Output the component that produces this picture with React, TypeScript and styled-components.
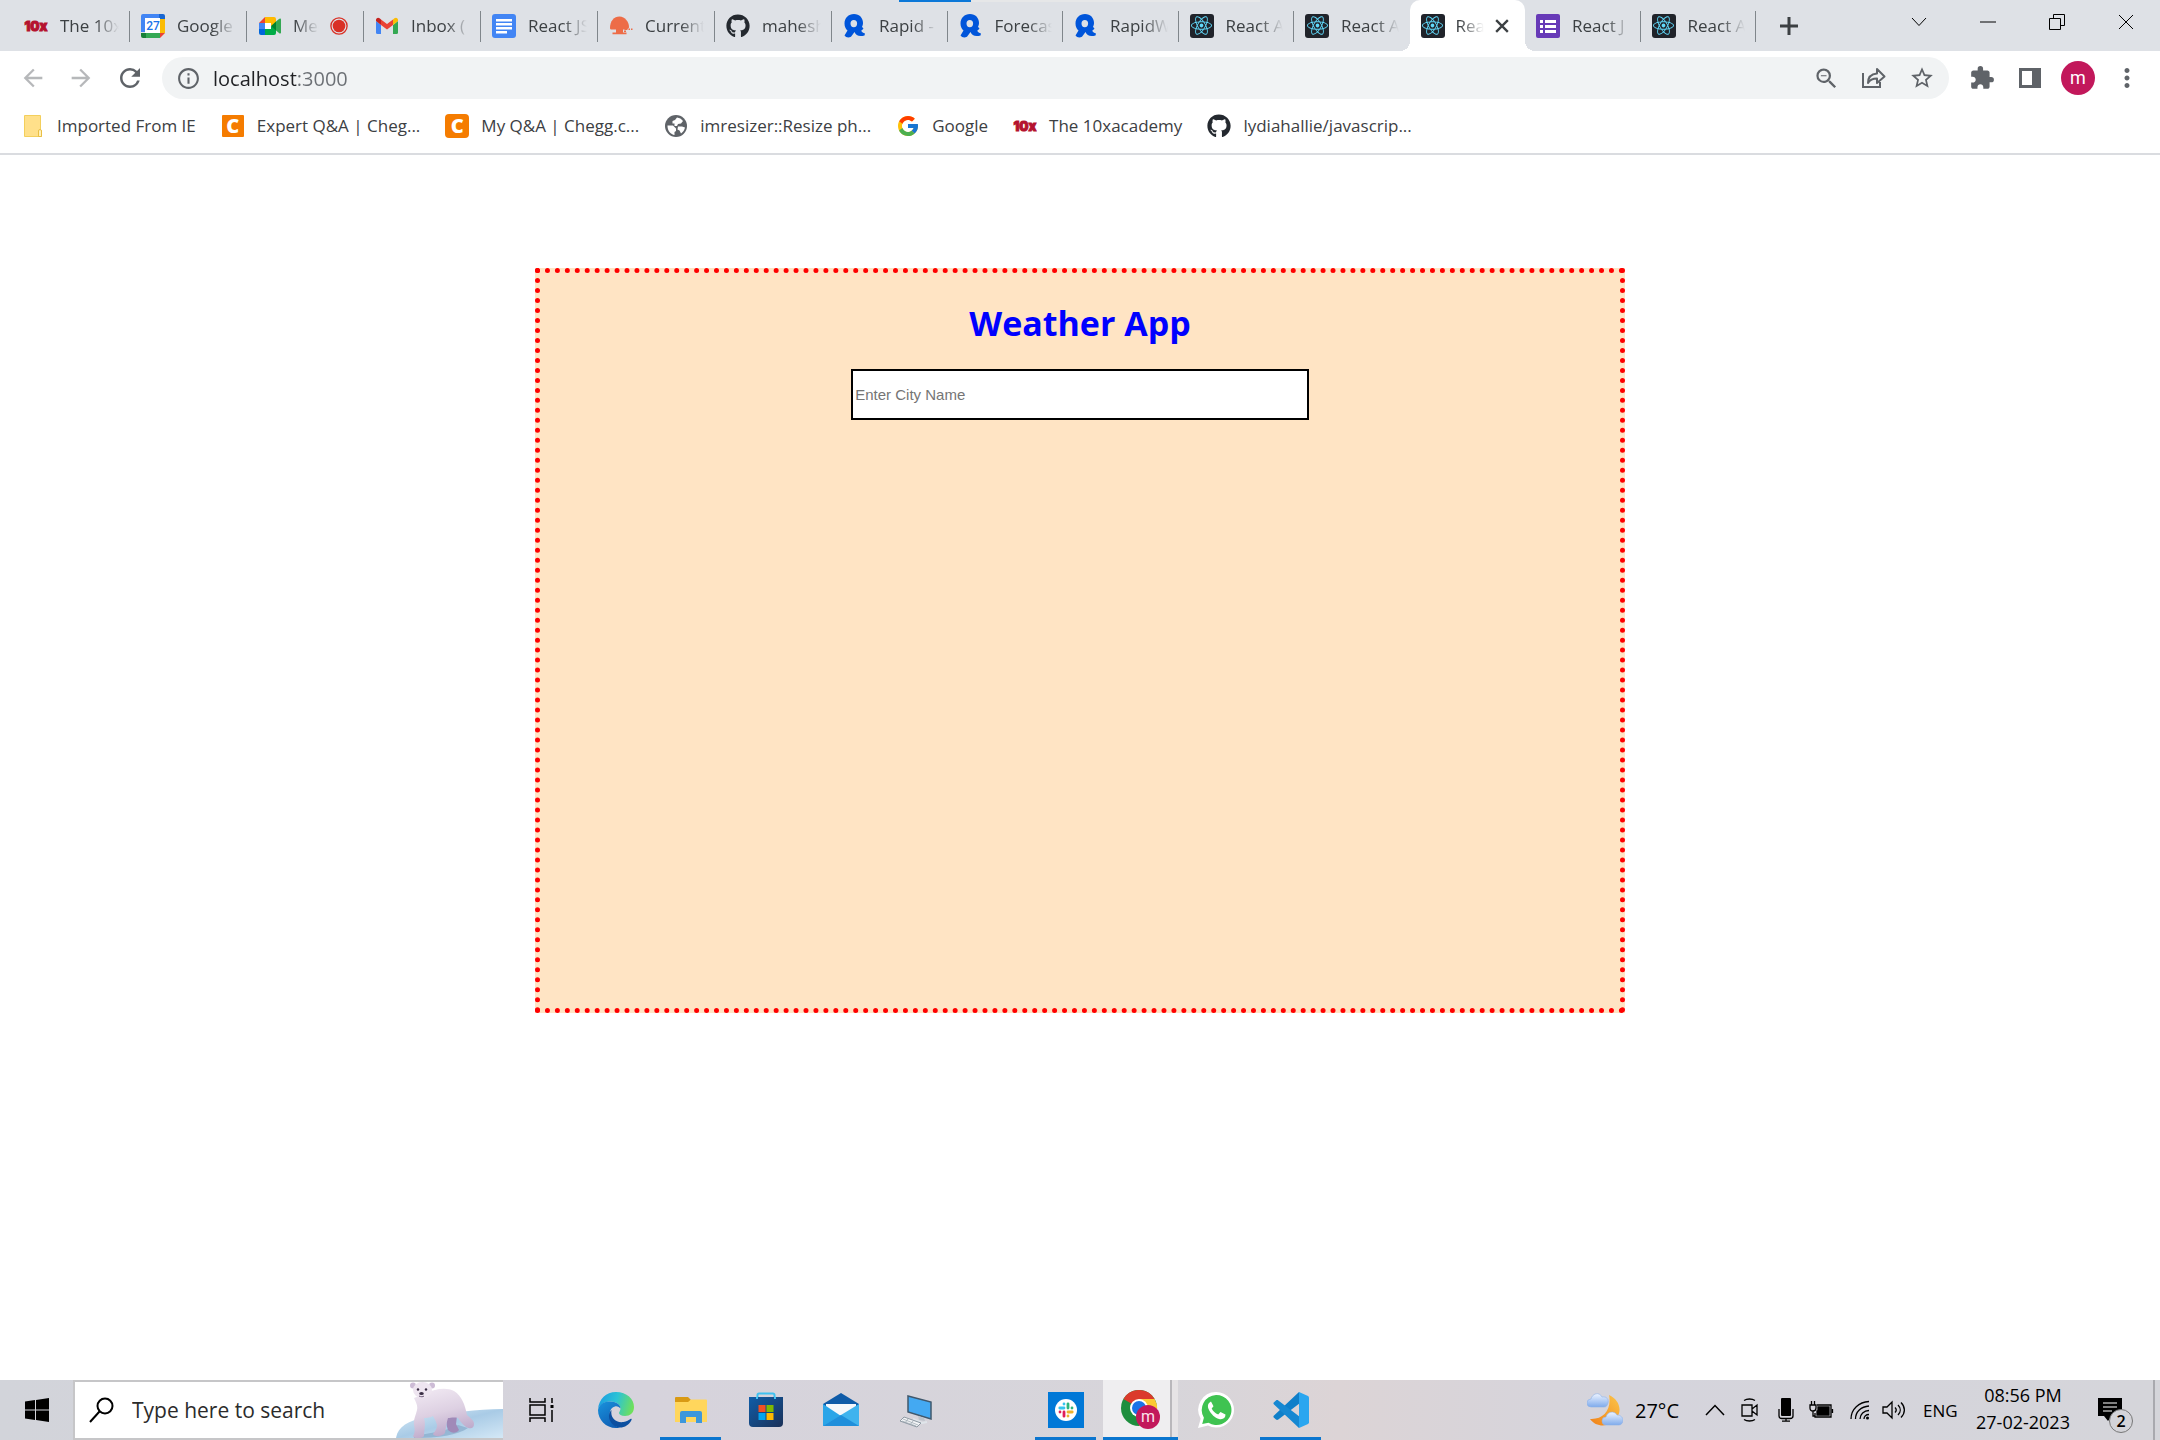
import React from "react";
import styled, { createGlobalStyle, css } from "styled-components";
import { FaGithub, FaReact } from "react-icons/fa";
import { FcGoogle } from "react-icons/fc";
import {
  MdArrowBack,
  MdArrowForward,
  MdExtension,
  MdInfoOutline,
  MdMoreVert,
  MdRefresh,
  MdStarBorder,
  MdZoomOut,
} from "react-icons/md";

const GlobalStyle = createGlobalStyle`
  *, *::before, *::after { box-sizing: border-box; }
  body {
    margin: 0;
    background: #fff;
    color: #3c4043;
    font-family: "Open Sans", "Noto Sans", sans-serif;
  }
  button, input { font: inherit; color: inherit; }
  button { border: 0; padding: 0; background: none; cursor: pointer; }
  svg { display: block; flex: none; }
`;

/* ---------- layout ---------- */

const Desktop = styled.div`
  display: flex;
  flex-direction: column;
  height: 100vh;
  min-height: 640px;
`;

const TabStrip = styled.header`
  position: relative;
  display: flex;
  height: 51px;
  padding-left: 13px;
  background: #dee1e6;
`;

const LoadingBar = styled.div`
  position: absolute;
  top: 0;
  left: 899px;
  width: 361px;
  height: 2px;
  background: linear-gradient(90deg, #0b78d8 72px, #e6e7e8 72px);
`;

const TabGroup = styled.div<{ $width: number; $count: number }>`
  display: grid;
  grid-template-columns: repeat(${(p) => p.$count}, minmax(0, 1fr));
  flex: 0 1 ${(p) => p.$width}px;
`;

const Tab = styled.button<{ $active?: boolean; $divider?: boolean; $trailing?: boolean }>`
  position: relative;
  display: flex;
  align-items: center;
  gap: ${(p) => (p.$trailing ? 11 : 12)}px;
  min-width: 0;
  padding: 0 ${(p) => (p.$trailing ? 16 : 11)}px 0 11px;
  text-align: left;
  font-size: 17px;

  ${(p) =>
    p.$divider &&
    css`
      &::after {
        content: "";
        position: absolute;
        right: 0;
        top: 11px;
        width: 1px;
        height: 31px;
        background: #80868b;
      }
    `}

  ${(p) =>
    p.$active &&
    css`
      background: #fff;
      border-radius: 10px 10px 0 0;

      &::before,
      &::after {
        content: "";
        position: absolute;
        bottom: 0;
        width: 10px;
        height: 10px;
      }
      &::before {
        left: -10px;
        background: radial-gradient(circle at 0 0, transparent 10px, #fff 10px);
      }
      &::after {
        right: -10px;
        background: radial-gradient(circle at 100% 0, transparent 10px, #fff 10px);
      }
    `}
`;

const TabLabel = styled.span`
  flex: 1;
  min-width: 0;
  overflow: hidden;
  white-space: nowrap;
  mask-image: linear-gradient(90deg, #000 calc(100% - 24px), transparent);
`;

const NewTab = styled.button`
  display: grid;
  place-items: center;
  width: 66px;
`;

const WindowControls = styled.div`
  display: flex;
  margin-left: auto;
  height: 44px;
`;

const WindowButton = styled.button`
  display: grid;
  place-items: center;
  width: 69px;
  color: #000;
`;

const Toolbar = styled.div`
  display: flex;
  align-items: center;
  height: 54px;
  padding: 0 20px 0 19px;
  color: #5f6368;
`;

const NavButtons = styled.div`
  display: flex;
  gap: 20px;
  margin-right: 19px;
`;

const IconButton = styled.button<{ $muted?: boolean }>`
  display: grid;
  place-items: center;
  width: 28px;
  height: 34px;
  opacity: ${(p) => (p.$muted ? 0.45 : 1)};
`;

const AddressBar = styled.div`
  display: flex;
  flex: 1;
  align-items: center;
  gap: 20px;
  height: 42px;
  padding: 0 13px 0 14px;
  border-radius: 21px;
  background: #f1f3f4;
`;

const AddressField = styled.label`
  display: flex;
  flex: 1;
  align-items: center;
  gap: 12px;
`;

const AddressInput = styled.input`
  flex: 1;
  min-width: 0;
  border: 0;
  padding: 0;
  outline: 0;
  font-size: 20px;
  color: #202124;
  -webkit-text-fill-color: transparent;
  background: linear-gradient(90deg, #202124 84px, #6b6f74 84px);
  background-clip: text;
`;

const ToolbarActions = styled.div`
  display: flex;
  align-items: center;
  gap: 20px;
  margin-left: 19px;
`;

const Avatar = styled.button`
  width: 34px;
  height: 34px;
  margin: 0 -3px;
  border-radius: 50%;
  background: #c2185b;
  color: #fff;
  font-family: Roboto, sans-serif;
  font-size: 18px;
  line-height: 34px;
`;

const Bookmarks = styled.nav`
  display: flex;
  align-items: center;
  gap: 25px;
  height: 50px;
  padding: 0 21px 6px;
  border-bottom: 2px solid #dadce0;
`;

const Bookmark = styled.a`
  display: flex;
  align-items: center;
  gap: 12px;
  color: #3c4043;
  font-size: 17px;
  line-height: 24px;
  text-decoration: none;
  white-space: nowrap;
`;

const CheggMark = styled.span<{ $size: number }>`
  display: grid;
  place-items: center;
  width: ${(p) => p.$size}px;
  height: ${(p) => p.$size}px;
  margin: 0 ${(p) => (24 - p.$size) / 2}px;
  border-radius: ${(p) => (p.$size > 22 ? 4 : 1)}px;
  background: #f57c00;
  color: #fff;
  font-size: 20px;
  font-weight: 800;
  line-height: 20px;
`;

/* ---------- page ---------- */

const Page = styled.main`
  flex: 1;
  min-height: 0;
`;

const WeatherCard = styled.section`
  box-sizing: content-box;
  display: flex;
  flex-direction: column;
  align-items: center;
  width: 50%;
  height: 60%;
  margin: 113px auto 0;
  border: 5px dotted red;
  background: bisque;
`;

const Title = styled.h1`
  margin: 24px 0 20px;
  color: #00f;
  font-size: 34px;
  font-weight: 700;
  line-height: 52px;
`;

const CityInput = styled.input`
  box-sizing: content-box;
  width: 42%;
  height: 47px;
  padding: 0;
  border: 2px solid #000;
  border-radius: 0;
  background: #fff;
  font-family: "Liberation Sans", Arial, sans-serif;
  font-size: 15px;
  text-indent: 2px;

  &::placeholder {
    color: #757575;
    opacity: 1;
  }
`;

/* ---------- taskbar ---------- */

const Taskbar = styled.footer`
  display: flex;
  height: 60px;
  background: linear-gradient(
    90deg,
    #d2d4da 0,
    #d6d3dc 30%,
    #d7d5da 54%,
    #dcd4d6 62%,
    #d5d4dc 74%,
    #d5d5da 100%
  );
  color: #000;
`;

const StartButton = styled.button`
  display: grid;
  place-items: center;
  width: 73px;
`;

const SearchBox = styled.label`
  display: flex;
  align-items: center;
  width: 430px;
  padding-left: 14px;
  border: 2px solid #c6c6c8;
  border-right: 0;
  background: #fff;
`;

const SearchInput = styled.input`
  flex: 1;
  min-width: 0;
  margin-left: 17px;
  padding: 0;
  border: 0;
  outline: 0;
  background: none;
  font-size: 21px;

  &::placeholder {
    color: #2b2b2b;
    opacity: 1;
  }
`;

const TaskButton = styled.button<{ $open?: boolean; $current?: boolean }>`
  display: grid;
  place-items: center;
  width: 75px;
  background: ${(p) =>
    p.$current
      ? "linear-gradient(90deg, #efeef0 67px, #b9b7bb 67px 69px, #e6e3e5 69px)"
      : "none"};
  background-clip: padding-box;
  ${(p) =>
    p.$open &&
    css`
      background-image: linear-gradient(#0b76cf, #0b76cf);
      background-repeat: no-repeat;
      background-position: 50% 100%;
      background-size: 61px 3px;
    `}
  ${(p) =>
    p.$current &&
    css`
      border-bottom: 3px solid #0b76cf;
      padding-top: 3px;
    `}
`;

const TaskGap = styled.span`
  width: 75px;
`;

const Tray = styled.div`
  display: flex;
  align-items: center;
  margin-left: auto;
`;

const Weather = styled.button`
  display: flex;
  align-items: center;
  gap: 12px;
  width: 118px;
  font-size: 20px;
`;

const TrayIcon = styled.button<{ $width: number }>`
  display: grid;
  justify-items: start;
  width: ${(p) => p.$width}px;
`;

const Language = styled.button`
  width: 34px;
  font-size: 17px;
  text-align: left;
`;

const Clock = styled.button`
  width: 112px;
  margin: 0 19px 2px 10px;
  font-size: 18px;
  line-height: 27px;
  text-align: center;
`;

const Notifications = styled.button`
  position: relative;
  width: 55px;
  height: 60px;
`;

const Badge = styled.span`
  position: absolute;
  left: 11px;
  top: 29px;
  width: 24px;
  height: 24px;
  border: 1px solid #777;
  border-radius: 50%;
  background: #d3d3d8;
  font-size: 16px;
  font-weight: 600;
  line-height: 22px;
`;

const ShowDesktop = styled.button`
  align-self: stretch;
  width: 7px;
  border-left: 2px solid #a9a9ae;
`;

/* ---------- site icons ---------- */

const TenXIcon = () => (
  <svg width="24" height="24" viewBox="0 0 24 24">
    <text
      x="12"
      y="17"
      textAnchor="middle"
      fontFamily="Inter, sans-serif"
      fontWeight="900"
      fontSize="13"
      fill="#b5122f"
      stroke="#b5122f"
      strokeWidth="1"
    >
      10x
    </text>
  </svg>
);

const CalendarIcon = () => (
  <svg width="24" height="24" viewBox="0 0 24 24">
    <path d="M2 0h16v5H5v13H0V2a2 2 0 0 1 2-2z" fill="#4285f4" />
    <path d="M18 0h4a2 2 0 0 1 2 2v4h-6z" fill="#1967d2" />
    <path d="M19 5h5v14h-5z" fill="#fbbc04" />
    <path d="M5 19h14v5H5z" fill="#34a853" />
    <path d="M0 19h5v5H2a2 2 0 0 1-2-2z" fill="#188038" />
    <path d="M19 19h5l-5 5z" fill="#ea4335" />
    <path d="M4 4h15v15H4z" fill="#fff" />
    <text
      x="12"
      y="16"
      textAnchor="middle"
      fontFamily="Roboto, sans-serif"
      fontSize="12"
      fontWeight="500"
      fill="#1a73e8"
    >
      27
    </text>
  </svg>
);

const MeetIcon = () => (
  <svg width="24" height="24" viewBox="0 0 24 24">
    <path d="M1 9l6-6v6z" fill="#ea4335" />
    <path d="M1 9h6v6H1z" fill="#4285f4" />
    <path d="M1 15h6v6H3a2 2 0 0 1-2-2z" fill="#0066da" />
    <path d="M7 3h9a2 2 0 0 1 2 2v5l-5 2V9H7z" fill="#ffba00" />
    <path d="M7 15h6v-3l5 2v5a2 2 0 0 1-2 2H7z" fill="#00ac47" />
    <path d="M7 9h6v6H7z" fill="#fff" />
    <path d="M13 12l5-4.400v8.800z" fill="#00832d" />
    <path d="M18 7.600l3-2.600c1-1 2-.5 2 .6v12.800c0 1.100-1 1.600-2 .6l-3-2.600z" fill="#34a853" />
  </svg>
);

const RecordingIcon = () => (
  <svg width="18" height="20" viewBox="0 0 20 20">
    <circle cx="10" cy="10" r="9" fill="none" stroke="#d93025" strokeWidth="1.500" />
    <circle cx="10" cy="10" r="7" fill="#d93025" />
  </svg>
);

const GmailIcon = () => (
  <svg width="24" height="24" viewBox="0 0 24 24">
    <path d="M1 7l5 4v9H2.500A1.500 1.500 0 0 1 1 18.500z" fill="#4285f4" />
    <path d="M18 11l5-4v11.500a1.500 1.500 0 0 1-1.500 1.500H18z" fill="#34a853" />
    <path d="M6 5.500l6 4.500 6-4.500V11l-6 4.500L6 11z" fill="#ea4335" />
    <path d="M1 7V6c0-2 2-3 3.600-1.800L6 5.500V11z" fill="#c5221f" />
    <path d="M23 7V6c0-2-2-3-3.600-1.800L18 5.500V11z" fill="#fbbc04" />
  </svg>
);

const DocsIcon = () => (
  <svg width="24" height="24" viewBox="0 0 24 24">
    <rect width="24" height="24" rx="3" fill="#4285f4" />
    <path d="M4 5h16v2.500H4zM4 9h16v2.500H4zM4 13h16v2.500H4zM4 17h11v2.500H4z" fill="#fff" />
  </svg>
);

const JellyIcon = () => (
  <svg width="24" height="24" viewBox="0 0 24 24" fill="#ed6c47">
    <path d="M1 14C1 7 5 2.500 10.500 2.500S20 8 20 13c0 2-3 2.500-5 2.500H3c-1.500 0-2-.5-2-1.500z" />
    <path d="M7 15h7v5H7zM3.500 18.500h14v1.800h-14zM15.500 14.500h3v1.500h-3zM15 16.500h2v1.500h-2zM19.500 14.500h1.500v1.500h-1.500zM22 14.500h1.500v1.500H22z" />
  </svg>
);

const RapidIcon = () => (
  <svg width="24" height="24" viewBox="0 0 24 24">
    <path
      fillRule="evenodd"
      d="M11 0C5.500 0 1.500 4 1.500 9.500c0 3 1.200 5.500 3 7L1.500 21.500c1.500 2 4 2.500 6.500 1.200L11.500 18c1.500 3.500 4.500 5 10 3.500l.5-2c-1.800-.3-3-1.200-3.800-2.700l2.300-2-1.500-2c.8-1.300 1-2.800 1-4C20 4 16.500 0 11 0zm-.2 6a3.300 3.600 0 1 1 0 7.200 3.300 3.600 0 0 1 0-7.200z"
      fill="#0055da"
    />
  </svg>
);

const FormsIcon = () => (
  <svg width="24" height="24" viewBox="0 0 24 24">
    <rect width="24" height="24" rx="2" fill="#673ab7" />
    <path
      d="M4 6h3v3H4zM9 6h11v3H9zM4 11h3v3H4zM9 11h11v3H9zM4 16h3v3H4zM9 16h11v3H9z"
      fill="#fff"
    />
  </svg>
);

const ReactTile = styled.span`
  display: grid;
  place-items: center;
  flex: none;
  width: 24px;
  height: 24px;
  border-radius: 3px;
  background: #20232a;
  color: #61dafb;
  font-size: 21px;
`;

const ReactIcon = () => (
  <ReactTile>
    <FaReact />
  </ReactTile>
);

const GithubIcon = () => <FaGithub size={24} color="#24292f" />;

const FolderIcon = () => (
  <svg width="24" height="24" viewBox="0 0 24 24">
    <path d="M3.500 1.500h16v14l1 1v6h-17z" fill="#ffe08a" stroke="#f3cf5c" />
    <path d="M17.500 22.500v-5.500a1.500 1.500 0 0 1 3 0v5.500z" fill="#fff1bd" stroke="#e9bf45" />
  </svg>
);

const GlobeIcon = () => (
  <svg width="24" height="24" viewBox="0 0 24 24">
    <circle cx="12" cy="12" r="11" fill="#5f6368" />
    <path
      d="M3.500 11.500h5.500l3 3v2.500l-1.500 1v3C7 20.500 3.500 17 3.500 12zM13 3.500c2.500.3 4.500 1.500 6 3.500l-2 2.500-3 .5-1 2h-2.500V9.500H8.500V7L11 6zM14 12.500h4l3 1c-.5 2.500-2 4.500-4 6l-1.500-3-2-1z"
      fill="#fff"
    />
  </svg>
);

/* ---------- window and toolbar icons ---------- */

const Stroke = styled.svg.attrs({ fill: "none", stroke: "currentColor" })``;

const CloseIcon = () => (
  <Stroke width="14" height="14" viewBox="0 0 12 12" strokeWidth="2">
    <path d="M1 1l10 10M11 1L1 11" />
  </Stroke>
);

const ShareIcon = () => (
  <Stroke width="24" height="24" viewBox="0 0 24 24" strokeWidth="2">
    <path d="M1 7v14h17v-5" />
    <path d="M6 17c0-6 3-9 9-9.500V3l7.500 7.500L15 17v-4.500c-4 0-7 1-9 4.500z" strokeLinejoin="round" />
  </Stroke>
);

const SidePanelIcon = () => (
  <svg width="24" height="24" viewBox="0 0 24 24" fill="currentColor">
    <path fillRule="evenodd" d="M1 2h22v20H1zM4 5v14h10V5z" />
  </svg>
);

/* ---------- taskbar icons ---------- */

const WindowsIcon = () => (
  <svg width="24" height="24" viewBox="0 0 24 24">
    <path d="M0 3.500L10 2v9.500H0zM11 1.900L24 0v11.500H11zM0 12.500h10V22L0 20.500zM11 12.500h13V24l-13-1.900z" />
  </svg>
);

const SearchIcon = () => (
  <Stroke width="26" height="26" viewBox="0 0 26 26" strokeWidth="2">
    <circle cx="16" cy="9" r="7.500" />
    <path d="M10.500 14.500L1 25" />
  </Stroke>
);

const PolarBear = () => (
  <svg width="107" height="56" viewBox="0 0 107 56">
    <defs>
      <linearGradient id="ice" x1="0" y1="0" x2="1" y2="1">
        <stop offset="0" stopColor="#d9ecf8" />
        <stop offset=".5" stopColor="#a9cbe6" />
        <stop offset="1" stopColor="#d4e8f6" />
      </linearGradient>
      <linearGradient id="fur" x1=".2" y1="0" x2=".5" y2="1">
        <stop offset="0" stopColor="#f0e8f2" />
        <stop offset=".5" stopColor="#ddd0e2" />
        <stop offset="1" stopColor="#b9a5c8" />
      </linearGradient>
    </defs>
    <path d="M0 56c2-12 12-17 30-21 25-4 50-8 77-8v29z" fill="url(#ice)" />
    <path d="M18 55c10-4 28-4 44-12l10 3c-10 7-30 10-54 10z" fill="#7ea3c4" opacity=".6" />
    <path d="M52 32l9 2-1 8 3 6c-3 4-8 3-11 0-2-5-2-10 0-16z" fill="#a08ab8" />
    <path
      d="M28 12C38 7 50 5 58 9c8 5 11 14 13 24 3 3 7 5 7 9 0 5-4 5-8 3-4-3-6-6-8-9-4-1-8 0-10 0-2 6-2 10-3 15-3 4-11 4-12 1 2-3 4-5 4-9-1-4-3-7-4-9-4 2-7 2-9 2 2 6 0 12 0 18-2 3-10 3-11 0 2-3 2-7 1-11-1-5 2-10 3-15 1-4-1-8-3-12z"
      fill="url(#fur)"
    />
    <circle cx="17" cy="3.500" r="3" fill="#cdbcd6" />
    <circle cx="36" cy="3.500" r="3" fill="#cdbcd6" />
    <ellipse cx="26.500" cy="8" rx="9.500" ry="8" fill="#eee5f0" />
    <circle cx="22" cy="7.500" r="1.200" fill="#3a2d44" />
    <circle cx="30" cy="7.500" r="1.200" fill="#3a2d44" />
    <ellipse cx="25.500" cy="11.500" rx="2.300" ry="1.500" fill="#3a2d44" />
    <path d="M23 14c2 1 4 1 5 0" stroke="#6d5a78" fill="none" />
  </svg>
);

const TaskViewIcon = () => (
  <Stroke width="26" height="24" viewBox="0 0 26 24" strokeWidth="1.500">
    <path d="M2 0v4h15V0M2 24v-4h15v4M2 7h15v10H2zM24 0v5M24 12v12" />
    <path d="M22.500 7h3v3h-3z" fill="currentColor" stroke="none" />
  </Stroke>
);

const EdgeIcon = () => (
  <svg width="36" height="36" viewBox="0 0 36 36">
    <defs>
      <linearGradient id="edgeTop" x1="0" y1=".3" x2="1" y2=".5">
        <stop offset="0" stopColor="#1b9de2" />
        <stop offset=".5" stopColor="#2cc3d5" />
        <stop offset="1" stopColor="#6fe05a" />
      </linearGradient>
      <linearGradient id="edgeSide" x1="0" y1="0" x2=".6" y2="1">
        <stop offset="0" stopColor="#1993dd" />
        <stop offset="1" stopColor="#0f5fb5" />
      </linearGradient>
    </defs>
    <path
      d="M0 17C1 7 8 0 18 0c11 0 18 7 18 15 0 6-4 9-9 9-4 0-6-1.500-6-3 0-1 1.500-2 1.500-4.500 0-4-4.500-7-10-7C6.500 9.500 2 12 0 17z"
      fill="url(#edgeTop)"
    />
    <path
      d="M0 18C1 12 6 9.500 12 9.500c6 0 10.500 3 10.500 7-2-2-4-2.500-5.500-2-4 1-6 5-5 10 1 6 5 10 10 11-2 .5-3 .5-4 .5C8 36 0 28 0 18z"
      fill="url(#edgeSide)"
    />
    <path
      d="M13.500 18c-1.500 8 4.500 13 12 12 3-.5 5.500-2 7-3 .8-.4 1.500.2 1 1C31 33 26 36 21 35.500 12 34 8 23 13.500 18z"
      fill="#0c4fa0"
    />
  </svg>
);

const ExplorerIcon = () => (
  <svg width="32" height="28" viewBox="0 0 32 28">
    <path d="M0 2a1 1 0 0 1 1-1h12l3 3-3 4H0z" fill="#d99a14" />
    <path d="M0 6h13l3-2.500h15a1 1 0 0 1 1 1V26H0z" fill="#ffd65c" />
    <path d="M5 27V17a2 2 0 0 1 2-2h18a2 2 0 0 1 2 2v10h-6v-6H11v6z" fill="#3d97dc" />
  </svg>
);

const StoreIcon = () => (
  <svg width="36" height="36" viewBox="0 0 36 36">
    <defs>
      <linearGradient id="store" x1="0" y1="0" x2="1" y2="1">
        <stop offset="0" stopColor="#0f5da8" />
        <stop offset="1" stopColor="#1b3158" />
      </linearGradient>
    </defs>
    <path d="M9.500 8V3a1.500 1.500 0 0 1 1.500-1.500h14A1.500 1.500 0 0 1 26.500 3v5" fill="none" stroke="#3fc1f0" strokeWidth="2" />
    <path d="M1 5h34v26a4 4 0 0 1-4 4H5a4 4 0 0 1-4-4z" fill="url(#store)" />
    <path d="M9 5v2M27 5v2" stroke="#3fc1f0" strokeWidth="2" />
    <path d="M10.500 13H17.500v7h-7z" fill="#f25022" />
    <path d="M18.500 13H25.500v7h-7z" fill="#7fba00" />
    <path d="M10.500 21H17.500v7h-7z" fill="#00a4ef" />
    <path d="M18.500 21H25.500v7h-7z" fill="#ffb900" />
  </svg>
);

const MailIcon = () => (
  <svg width="36" height="36" viewBox="0 0 36 36">
    <path d="M0 12L18 1l18 11v8H0z" fill="#0f5ba8" />
    <path d="M3 12h30v10L18 30 3 22z" fill="#f5f7fb" />
    <path d="M0 12l18 12v10H0z" fill="#2aa5e8" />
    <path d="M36 12v22H0z" fill="#3fb3ee" />
    <path d="M18 23l18 11H0z" fill="#1f8fdb" />
  </svg>
);

const ComputerIcon = () => (
  <svg width="36" height="36" viewBox="0 0 36 36">
    <path d="M10 4l23 6v17L10 20z" fill="#44a9f2" stroke="#40586c" strokeWidth="1.500" />
    <path d="M20 24l6 2 1 3-6-1z" fill="#bcc4cc" />
    <path d="M15 27l9 4 5-1" fill="none" stroke="#dfe5ea" strokeWidth="2" />
    <path d="M6 25l17 6-4 4L2 29z" fill="#f2f4f6" stroke="#8e99a3" />
    <path d="M5 27l15 6M4 29l14 5M10 27l-3 4M15 29l-3 4" stroke="#98a3ad" strokeWidth=".7" />
  </svg>
);

const SlackIcon = () => (
  <svg width="36" height="36" viewBox="0 0 36 36">
    <path d="M0 0h36v36H0z" fill="#0078d7" />
    <circle cx="18" cy="18" r="11" fill="#fff" />
    <g strokeWidth="2.800" strokeLinecap="round">
      <path d="M11.800 16h4.200M16 12v0" stroke="#36c5f0" />
      <path d="M20 11.800v4.200M24 16v0" stroke="#2eb67d" />
      <path d="M20 20h4.200M20 24v0" stroke="#ecb22e" />
      <path d="M16 20v4.200M12 20v0" stroke="#e01e5a" />
    </g>
  </svg>
);

const ChromeIcon = () => (
  <svg width="40" height="40" viewBox="0 0 40 40">
    <circle cx="18" cy="18" r="18" fill="#1e8e3e" />
    <path d="M18 18L2.400 9A18 18 0 0 1 33.600 9z" fill="#db3a2c" />
    <path d="M18 9h15.600A18 18 0 0 1 18 36l8-13.500z" fill="#fcc934" />
    <circle cx="18" cy="18" r="9" fill="#fff" />
    <circle cx="18" cy="18" r="7" fill="#1a73e8" />
    <circle cx="27" cy="27" r="12" fill="#c2185b" />
    <text x="27" y="32" textAnchor="middle" fontFamily="Roboto, sans-serif" fontSize="16" fill="#fbe3ec">
      m
    </text>
  </svg>
);

const WhatsappIcon = () => (
  <svg width="36" height="36" viewBox="0 0 36 36">
    <path d="M18 0a17.800 17.800 0 1 1-8 33.600L0 36l2.700-9.200A17.800 17.800 0 0 1 18 0z" fill="#fff" />
    <path d="M18 3a15 15 0 1 1-7.500 27.700L4.200 32l1.700-6.200A15 15 0 0 1 18 3z" fill="#3fc351" />
    <path
      d="M13 9.500c-3 1.500-4 4.500-2 8.500s6 8 10 9c4 .8 6.500-1 6.500-4.500l-5-2.500-2.300 2.500c-3-1.200-5.200-3.300-6.500-6l1.800-2.300z"
      fill="#fff"
    />
  </svg>
);

const CodeIcon = () => (
  <svg width="36" height="36" viewBox="0 0 36 36">
    <path d="M26 0L1 23.500c-.8.8-.8 1.500 0 2.200l2 1.800c.6.600 1.600.6 2.300 0L27 11z" fill="#0f7fc9" />
    <path d="M26 36L1 12.500c-.8-.8-.8-1.500 0-2.200l2-1.800c.6-.6 1.600-.6 2.300 0L27 25z" fill="#1688d2" />
    <path d="M26 0l9 4a2 2 0 0 1 1 1.700v24.600a2 2 0 0 1-1 1.700l-9 4z" fill="#2aa6f0" />
  </svg>
);

const MoonCloudIcon = () => (
  <svg width="36" height="34" viewBox="0 0 36 34">
    <defs>
      <linearGradient id="cloud" x1="0" y1="0" x2="0" y2="1">
        <stop offset="0" stopColor="#eef4ff" />
        <stop offset="1" stopColor="#7fabec" />
      </linearGradient>
      <linearGradient id="moon" x1="1" y1="0" x2="0" y2="1">
        <stop offset="0" stopColor="#fbc54a" />
        <stop offset="1" stopColor="#f08018" />
      </linearGradient>
    </defs>
    <path d="M22 2c9 4 13 13 9 21-5 11-21 13-28 3 13 1 22-9 19-24z" fill="url(#moon)" />
    <path d="M4 14a4 4 0 0 1 0-8c1-5 8-8 11-2 5-1 7 3 6 6-1 3-2 4-4 4z" fill="url(#cloud)" stroke="#8fb2e8" strokeWidth=".6" />
    <path d="M19 32a4 4 0 0 1 0-8c1-5 8-7 11-2 4 0 6 3 6 5 0 3-2 5-4 5z" fill="url(#cloud)" stroke="#8fb2e8" strokeWidth=".6" />
  </svg>
);

/* ---------- data ---------- */

type TabData = {
  label: string;
  icon: React.ReactNode;
  active?: boolean;
  recording?: boolean;
};

const wideTabs: TabData[] = [
  { label: "The 10x", icon: <TenXIcon /> },
  { label: "Google", icon: <CalendarIcon /> },
  { label: "Mee", icon: <MeetIcon />, recording: true },
  { label: "Inbox (", icon: <GmailIcon /> },
  { label: "React JS", icon: <DocsIcon /> },
  { label: "Current", icon: <JellyIcon /> },
  { label: "mahesh", icon: <GithubIcon /> },
];

const narrowTabs: TabData[] = [
  { label: "Rapid -", icon: <RapidIcon /> },
  { label: "Forecas", icon: <RapidIcon /> },
  { label: "RapidW", icon: <RapidIcon /> },
  { label: "React A", icon: <ReactIcon /> },
  { label: "React A", icon: <ReactIcon /> },
  { label: "Rea", icon: <ReactIcon />, active: true },
  { label: "React J", icon: <FormsIcon /> },
  { label: "React A", icon: <ReactIcon /> },
];

const bookmarks = [
  { label: "Imported From IE", icon: <FolderIcon /> },
  { label: "Expert Q&A | Cheg...", icon: <CheggMark $size={22}>C</CheggMark> },
  { label: "My Q&A | Chegg.c...", icon: <CheggMark $size={24}>C</CheggMark> },
  { label: "imresizer::Resize ph...", icon: <GlobeIcon /> },
  { label: "Google", icon: <FcGoogle size={24} /> },
  { label: "The 10xacademy", icon: <TenXIcon /> },
  { label: "lydiahallie/javascrip...", icon: <GithubIcon /> },
];

const renderTabs = (tabs: TabData[]) =>
  tabs.map((tab, i) => (
    <Tab
      key={i}
      $active={tab.active}
      $trailing={tab.active || tab.recording}
      $divider={!tab.active && !tabs[i + 1]?.active}
    >
      {tab.icon}
      <TabLabel>{tab.label}</TabLabel>
      {tab.recording && <RecordingIcon />}
      {tab.active && <CloseIcon />}
    </Tab>
  ));

export default function App() {
  return (
    <Desktop>
      <GlobalStyle />

      <TabStrip>
        <LoadingBar />
        <TabGroup $width={819} $count={7}>
          {renderTabs(wideTabs)}
        </TabGroup>
        <TabGroup $width={924} $count={8}>
          {renderTabs(narrowTabs)}
        </TabGroup>
        <NewTab aria-label="New tab">
          <Stroke width="18" height="18" viewBox="0 0 18 18" strokeWidth="3">
            <path d="M9 0v18M0 9h18" />
          </Stroke>
        </NewTab>
        <WindowControls>
          <WindowButton aria-label="Search tabs">
            <Stroke width="16" height="10" viewBox="0 0 16 10">
              <path d="M1 1l7 7.500L15 1" />
            </Stroke>
          </WindowButton>
          <WindowButton aria-label="Minimize">
            <Stroke width="16" height="2" viewBox="0 0 16 2">
              <path d="M0 1h16" />
            </Stroke>
          </WindowButton>
          <WindowButton aria-label="Restore">
            <Stroke width="16" height="16" viewBox="0 0 16 16">
              <path d="M.5 4.500h11v11H.5zM4.500 4V.5h11v11h-3.500" />
            </Stroke>
          </WindowButton>
          <WindowButton aria-label="Close">
            <Stroke width="16" height="16" viewBox="0 0 16 16">
              <path d="M1 1l14 14M15 1L1 15" />
            </Stroke>
          </WindowButton>
        </WindowControls>
      </TabStrip>

      <Toolbar>
        <NavButtons>
          <IconButton aria-label="Back" $muted>
            <MdArrowBack size={28} />
          </IconButton>
          <IconButton aria-label="Forward" $muted>
            <MdArrowForward size={28} />
          </IconButton>
          <IconButton aria-label="Reload">
            <MdRefresh size={30} />
          </IconButton>
        </NavButtons>
        <AddressBar>
          <AddressField>
            <MdInfoOutline size={25} aria-label="Site information" />
            <AddressInput aria-label="Address" defaultValue="localhost:3000" />
          </AddressField>
          <IconButton aria-label="Zoom">
            <MdZoomOut size={27} />
          </IconButton>
          <IconButton aria-label="Share">
            <ShareIcon />
          </IconButton>
          <IconButton aria-label="Bookmark this tab">
            <MdStarBorder size={26} />
          </IconButton>
        </AddressBar>
        <ToolbarActions>
          <IconButton aria-label="Extensions">
            <MdExtension size={26} />
          </IconButton>
          <IconButton aria-label="Side panel">
            <SidePanelIcon />
          </IconButton>
          <Avatar aria-label="Profile">m</Avatar>
          <IconButton aria-label="Menu">
            <MdMoreVert size={30} />
          </IconButton>
        </ToolbarActions>
      </Toolbar>

      <Bookmarks aria-label="Bookmarks">
        {bookmarks.map((b) => (
          <Bookmark key={b.label} href="#">
            {b.icon}
            {b.label}
          </Bookmark>
        ))}
      </Bookmarks>

      <Page>
        <WeatherCard>
          <Title>Weather App</Title>
          <CityInput aria-label="City" placeholder="Enter City Name" />
        </WeatherCard>
      </Page>

      <Taskbar>
        <StartButton aria-label="Start">
          <WindowsIcon />
        </StartButton>
        <SearchBox>
          <SearchIcon />
          <SearchInput aria-label="Search Windows" placeholder="Type here to search" />
          <PolarBear />
        </SearchBox>
        <TaskButton aria-label="Task view">
          <TaskViewIcon />
        </TaskButton>
        <TaskButton aria-label="Edge">
          <EdgeIcon />
        </TaskButton>
        <TaskButton aria-label="File Explorer" $open>
          <ExplorerIcon />
        </TaskButton>
        <TaskButton aria-label="Store">
          <StoreIcon />
        </TaskButton>
        <TaskButton aria-label="Mail">
          <MailIcon />
        </TaskButton>
        <TaskButton aria-label="Remote Desktop">
          <ComputerIcon />
        </TaskButton>
        <TaskGap />
        <TaskButton aria-label="Slack" $open>
          <SlackIcon />
        </TaskButton>
        <TaskButton aria-label="Chrome" $current>
          <ChromeIcon />
        </TaskButton>
        <TaskButton aria-label="WhatsApp">
          <WhatsappIcon />
        </TaskButton>
        <TaskButton aria-label="Visual Studio Code" $open>
          <CodeIcon />
        </TaskButton>

        <Tray>
          <Weather>
            <MoonCloudIcon />
            27°C
          </Weather>
          <TrayIcon $width={36} aria-label="Show hidden icons">
            <Stroke width="20" height="12" viewBox="0 0 20 12" strokeWidth="1.500">
              <path d="M1 11l9-9.500L19 11" />
            </Stroke>
          </TrayIcon>
          <TrayIcon $width={37} aria-label="Camera">
            <Stroke width="18" height="24" viewBox="0 0 18 24" strokeWidth="1.300">
              <path d="M1 7h10v11H1zM11 11l5-4v10l-5-4M3 2.500c3-2 8-2 11 0M3 21.500c3 2 8 2 11 0" />
            </Stroke>
          </TrayIcon>
          <TrayIcon $width={31} aria-label="Microphone">
            <Stroke width="16" height="24" viewBox="0 0 16 24" strokeWidth="1.300">
              <rect x="3" y="0" width="10" height="18" rx="1" fill="currentColor" stroke="none" />
              <path d="M1 11v7c0 2 1 2.500 3 2.500h8c2 0 3-.5 3-2.500v-7M8 20v3M4 23.200h8" />
            </Stroke>
          </TrayIcon>
          <TrayIcon $width={41} aria-label="Battery">
            <Stroke width="25" height="18" viewBox="0 0 25 18" strokeWidth="1.300">
              <path d="M8 4h14v12H6v-4M23.500 8v4M2.500 0v4M5.500 0v4M1 4h6v3c0 2-1 3-3 3S1 9 1 7zM4 10v5h2" />
              <path d="M9 6h11v8H8v-4h1z" fill="currentColor" />
            </Stroke>
          </TrayIcon>
          <TrayIcon $width={32} aria-label="Wi-Fi">
            <Stroke width="20" height="20" viewBox="0 0 20 20" strokeWidth="1.300">
              <path d="M1 19C1 9 9 2 19 1.500M5.500 19C5.500 12 11 6.500 19 6M10 19c0-4.500 4-8.500 9-8.500M14 19c0-2.500 2-4.500 5-4.500" />
              <circle cx="17.500" cy="18" r="1.500" fill="currentColor" stroke="none" />
            </Stroke>
          </TrayIcon>
          <TrayIcon $width={41} aria-label="Volume">
            <Stroke width="24" height="20" viewBox="0 0 24 20" strokeWidth="1.300">
              <path d="M1 7h4l5-5v16l-5-5H1zM13 7.500c1.500 1.500 1.500 3.500 0 5M16 5c3 3 3 7 0 10M19 2.500c4.500 4.500 4.500 10.500 0 15" />
            </Stroke>
          </TrayIcon>
          <Language>ENG</Language>
          <Clock>
            08:56 PM
            <br />
            27-02-2023
          </Clock>
          <Notifications aria-label="Notifications">
            <svg width="24" height="24" viewBox="0 0 24 24">
              <path d="M0 0h24v18H14l-4 5-4-5H0z" />
              <path d="M5 5h14M5 9h14M5 13h9" stroke="#fff" strokeWidth="1.200" />
            </svg>
            <Badge>2</Badge>
          </Notifications>
          <ShowDesktop aria-label="Show desktop" />
        </Tray>
      </Taskbar>
    </Desktop>
  );
}
